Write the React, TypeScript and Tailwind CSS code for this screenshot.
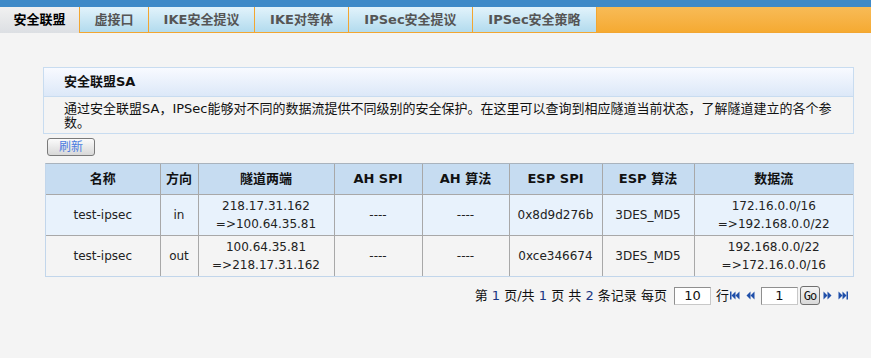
import React from 'react';

const tabs = [
  { label: '安全联盟', w: 'w-[79px]', active: true },
  { label: '虚接口', w: 'w-[69px]' },
  { label: 'IKE安全提议', w: 'w-[106px]' },
  { label: 'IKE对等体', w: 'w-[94px]' },
  { label: 'IPSec安全提议', w: 'w-[124px]' },
  { label: 'IPSec安全策略', w: 'w-[124px]' },
];

const rows = [
  { name: 'test-ipsec', dir: 'in', tunnel: ['218.17.31.162', '=>100.64.35.81'], ahSpi: '----', ahAlg: '----', espSpi: '0x8d9d276b', espAlg: '3DES_MD5', flow: ['172.16.0.0/16', '=>192.168.0.0/22'] },
  { name: 'test-ipsec', dir: 'out', tunnel: ['100.64.35.81', '=>218.17.31.162'], ahSpi: '----', ahAlg: '----', espSpi: '0xce346674', espAlg: '3DES_MD5', flow: ['192.168.0.0/22', '=>172.16.0.0/16'] },
];

const headers = ['名称', '方向', '隧道两端', 'AH SPI', 'AH 算法', 'ESP SPI', 'ESP 算法', '数据流'];

function NavIcon({ dir, bar }: { dir: 'left' | 'right'; bar?: boolean }) {
  const left = dir === 'left';
  return (
    <svg width="10" height="9" viewBox="0 0 10 9" className="fill-[#1f4fa9]">
      {left ? (
        <>
          {bar && <rect x="0" y="0.5" width="1.5" height="8" />}
          <polygon points={bar ? '1.5,4.5 5.5,0.5 5.5,8.5' : '0.5,4.5 4.5,0.5 4.5,8.5'} />
          <polygon points={bar ? '5.5,4.5 9.5,0.5 9.5,8.5' : '4.5,4.5 8.5,0.5 8.5,8.5'} />
        </>
      ) : (
        <>
          <polygon points={bar ? '0.5,0.5 4.5,4.5 0.5,8.5' : '1.5,0.5 5.5,4.5 1.5,8.5'} />
          <polygon points={bar ? '4.5,0.5 8.5,4.5 4.5,8.5' : '5.5,0.5 9.5,4.5 5.5,8.5'} />
          {bar && <rect x="8.5" y="0.5" width="1.5" height="8" />}
        </>
      )}
    </svg>
  );
}

export default function App() {
  return (
    <div className="w-[871px] h-[358px] overflow-hidden bg-[#f4f4f4] text-[#111] font-['DejaVu_Sans','Noto_Sans_CJK_SC',sans-serif]">
      <div className="h-[7px] bg-[#3f8ac8]" />
      <div className="flex h-[26px]">
        {tabs.map((t) =>
          t.active ? (
            <div key={t.label} className={`${t.w} flex items-center justify-center pb-[1px] bg-gradient-to-b from-[#f1f1f1] to-[#dcdfe3] text-[13px] font-bold text-black`}>
              {t.label}
            </div>
          ) : (
            <div key={t.label} className={`${t.w} flex items-center justify-center border-l border-b border-[#f2a631] bg-gradient-to-b from-[#e2f3fb] to-[#b2dbee] text-[13px] font-bold text-[#555]`}>
              {t.label}
            </div>
          )
        )}
        <div className="flex-1 border-l border-b border-[#f2a631] bg-gradient-to-b from-[#f8bb56] to-[#f5aa31]" />
      </div>

      <div className="pl-[43px]">
        <div className="mt-[34px] w-[811px] border border-[#c8dcf0]">
          <div className="h-[29px] flex items-center pl-[20px] border-b border-[#c8dcf0] bg-gradient-to-b from-[#f8faff] to-[#dce8f8] text-[13px] font-bold">
            安全联盟SA
          </div>
          <div className="pl-[20px] pr-[18px] pt-[5px] pb-[3px] text-[13px] leading-[14px]">
            通过安全联盟SA，IPSec能够对不同的数据流提供不同级别的安全保护。在这里可以查询到相应隧道当前状态，了解隧道建立的各个参数。
          </div>
        </div>

        <button className="mt-[4px] ml-[4px] w-[48px] h-[18px] rounded-[3px] border border-[#7a7a7a] bg-gradient-to-b from-[#fbfbfb] to-[#d8d8d8] text-[12px] leading-none text-[#4a7ce0] flex items-center justify-center">
          刷新
        </button>

        <div className="mt-[7px] ml-[2px] w-[809px] border border-[#c2d6eb] border-t-[#a9b3bd]">
          <table className="w-full table-fixed border-collapse border-hidden">
            <colgroup>
              <col className="w-[114px]" />
              <col className="w-[38px]" />
              <col className="w-[136px]" />
              <col className="w-[88px]" />
              <col className="w-[87px]" />
              <col className="w-[93px]" />
              <col className="w-[92px]" />
              <col />
            </colgroup>
            <thead>
              <tr className="h-[30px] bg-[#c6dcf1]">
                {headers.map((h) => (
                  <th key={h} className="border border-[#a8a8a8] text-[13px] font-bold text-[#111] text-center">
                    {h}
                  </th>
                ))}
              </tr>
            </thead>
            <tbody>
              {rows.map((r, i) => (
                <tr key={i} className={`h-[41px] ${i === 0 ? 'bg-[#e8f2fc]' : 'bg-[#f4f4f4]'}`}>
                  {[r.name, r.dir, r.tunnel, r.ahSpi, r.ahAlg, r.espSpi, r.espAlg, r.flow].map((c, j) => (
                    <td key={j} className="border border-[#a8a8a8] text-center text-[12px] leading-[18px] text-[#222]">
                      {Array.isArray(c) ? (
                        <>
                          <div>{c[0]}</div>
                          <div>{c[1]}</div>
                        </>
                      ) : (
                        c
                      )}
                    </td>
                  ))}
                </tr>
              ))}
            </tbody>
          </table>
        </div>

        <div className="mt-[9px] w-[805px] flex items-center justify-end text-[13px] text-[#111]">
          <span className="whitespace-pre">第 <span className="text-[#1a3580]">1</span> 页/共 <span className="text-[#1a3580]">1</span> 页 共 <span className="text-[#1a3580]">2</span> 条记录 每页</span>
          <div className="ml-[7px] w-[37px] h-[18px] bg-white border border-[#c8c8c8] border-t-[#8f8f8f] border-l-[#8f8f8f] flex items-center justify-center text-[13px]">10</div>
          <span className="ml-[5px]">行</span>
          <span className="ml-[1px]"><NavIcon dir="left" bar /></span>
          <span className="ml-[6px]"><NavIcon dir="left" /></span>
          <div className="ml-[5px] w-[37px] h-[18px] bg-white border border-[#c8c8c8] border-t-[#8f8f8f] border-l-[#8f8f8f] flex items-center justify-center text-[13px]">1</div>
          <div className="ml-[2px] w-[20px] h-[19px] rounded-[3px] border border-[#6f6f6f] bg-gradient-to-b from-[#f4f4f4] to-[#d9d9d9] flex items-center justify-center text-[12px] font-['DejaVu_Sans_Mono',monospace] tracking-[-1px]">Go</div>
          <span className="ml-[2px]"><NavIcon dir="right" /></span>
          <span className="ml-[6px]"><NavIcon dir="right" bar /></span>
        </div>
      </div>
    </div>
  );
}
